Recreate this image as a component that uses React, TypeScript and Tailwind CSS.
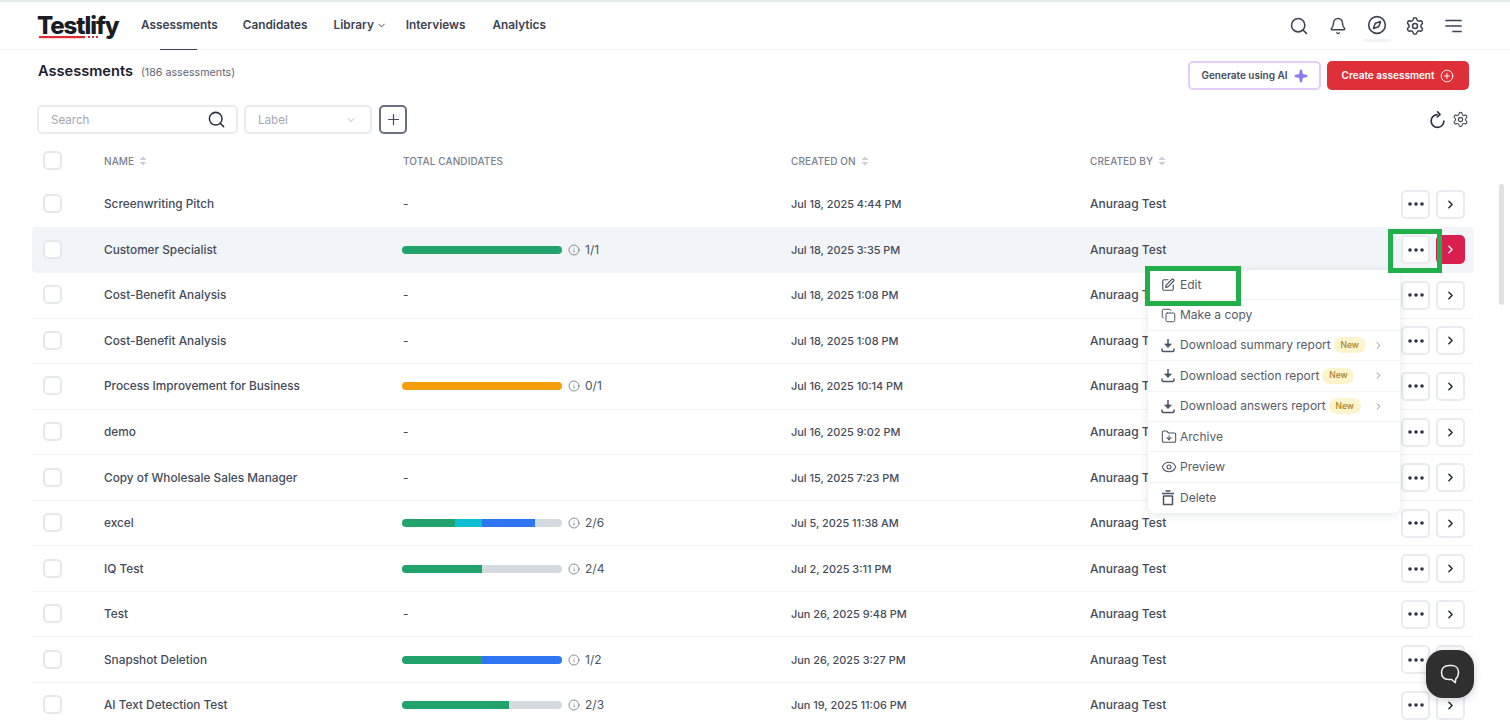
import { Search, Bell, Compass, Settings, Sparkle, CirclePlus, Plus, ChevronDown, ChevronRight, SquarePen, Copy, FolderDown, Eye, Info } from "lucide-react";

type Seg = { c: string; w: number };
type Row = { name: string; segs?: Seg[]; count?: string; date: string };

const green = "#22a36b", blue = "#2f74f0", cyan = "#0dbfd0", orange = "#f59e0b";

const rows: Row[] = [
  { name: "Screenwriting Pitch", date: "Jul 18, 2025 4:44 PM" },
  { name: "Customer Specialist", segs: [{ c: green, w: 100 }], count: "1/1", date: "Jul 18, 2025 3:35 PM" },
  { name: "Cost-Benefit Analysis", date: "Jul 18, 2025 1:08 PM" },
  { name: "Cost-Benefit Analysis", date: "Jul 18, 2025 1:08 PM" },
  { name: "Process Improvement for Business", segs: [{ c: orange, w: 100 }], count: "0/1", date: "Jul 16, 2025 10:14 PM" },
  { name: "demo", date: "Jul 16, 2025 9:02 PM" },
  { name: "Copy of Wholesale Sales Manager", date: "Jul 15, 2025 7:23 PM" },
  { name: "excel", segs: [{ c: green, w: 33.4 }, { c: cyan, w: 16.6 }, { c: blue, w: 33.4 }], count: "2/6", date: "Jul 5, 2025 11:38 AM" },
  { name: "IQ Test", segs: [{ c: green, w: 50 }], count: "2/4", date: "Jul 2, 2025 3:11 PM" },
  { name: "Test", date: "Jun 26, 2025 9:48 PM" },
  { name: "Snapshot Deletion", segs: [{ c: green, w: 50 }, { c: blue, w: 50 }], count: "1/2", date: "Jun 26, 2025 3:27 PM" },
  { name: "AI Text Detection Test", segs: [{ c: green, w: 66.7 }], count: "2/3", date: "Jun 19, 2025 11:06 PM" },
];

function Dots() {
  return (
    <svg width="18" height="6" viewBox="0 0 18 6" className="text-[#2d3348]">
      <circle cx="3" cy="3" r="1.8" fill="currentColor" />
      <circle cx="9" cy="3" r="1.8" fill="currentColor" />
      <circle cx="15" cy="3" r="1.8" fill="currentColor" />
    </svg>
  );
}

function SortIcon() {
  return (
    <svg width="8" height="10" viewBox="0 0 8 10" className="text-[#c9ced8]">
      <path d="M4 0.5 7.5 4H0.5Z M4 9.5 0.5 6H7.5Z" fill="currentColor" />
    </svg>
  );
}

function DownloadTray() {
  return (
    <svg width="14" height="15" viewBox="0 0 14 15" fill="none" stroke="#4b5563" strokeWidth="1.5">
      <path d="M7 1v8" />
      <path d="M3.6 6 7 9.6 10.4 6Z" fill="#4b5563" strokeWidth="0.8" />
      <path d="M1 11v1.2c0 .9.7 1.3 1.3 1.3h9.4c.6 0 1.3-.4 1.3-1.3V11" strokeLinecap="round" />
    </svg>
  );
}

function TrashIcon() {
  return (
    <svg width="14" height="16" viewBox="0 0 14 16" fill="none" stroke="#4b5563" strokeWidth="1.5">
      <path d="M1 3.5h12" />
      <path d="M4.5 1h5" />
      <path d="M2.5 6h9v8.5h-9z" strokeLinejoin="round" />
    </svg>
  );
}

function RefreshIcon() {
  return (
    <svg width="17" height="18" viewBox="0 0 17 18" fill="none" stroke="currentColor" strokeWidth="1.6" strokeLinecap="round">
      <path d="M8.2 3.6A6.4 6.4 0 1 0 14.9 10" />
      <path d="M8.6 0.8 11 3.6 8.2 6" strokeLinejoin="round" />
    </svg>
  );
}

function HeaderCell({ label, sort }: { label: string; sort?: boolean }) {
  return (
    <div className="flex items-center gap-[5px] text-[10px] font-medium tracking-[0.01em] text-[#7a8090]">
      <span>{label}</span>
      {sort && <SortIcon />}
    </div>
  );
}

function Checkbox() {
  return <div className="mt-[-1px] h-[19px] w-[19px] rounded-[5px] border-2 border-[#e6e8ee] bg-white" />;
}

function Progress({ segs, count }: { segs: Seg[]; count?: string }) {
  return (
    <div className="ml-[-1px] flex items-center">
      <div className="flex h-[8px] w-[160px] overflow-hidden rounded-full bg-[#d5dae1]">
        {segs.map((s, i) => (
          <div key={i} className="h-full" style={{ width: `${s.w}%`, backgroundColor: s.c }} />
        ))}
      </div>
      <Info size={12} strokeWidth={1.6} className="ml-[6px] text-[#6b7280]" />
      <span className="ml-[5px] text-[12px] text-[#4b5563]">{count}</span>
    </div>
  );
}

function TableRow({ row, active }: { row: Row; active: boolean }) {
  return (
    <div
      className={`grid h-[45.55px] grid-cols-[61px_299px_388px_299px_1fr_auto] items-center border-b pl-[11px] pr-[9px] ${
        active ? "rounded-[4px] border-transparent bg-[#f2f5f8]" : "border-[#f3f4f6]"
      }`}
    >
      <Checkbox />
      <div className="text-[11.8px] font-medium leading-[18px] text-[#444b5a]">{row.name}</div>
      <div className="text-[12px] text-[#444b5a]">{row.segs ? <Progress segs={row.segs} count={row.count} /> : "-"}</div>
      <div className="text-[10.9px] font-medium leading-[18px] text-[#444b5a]">{row.date}</div>
      <div className="text-[12px] font-medium leading-[18px] text-[#444b5a]">Anuraag Test</div>
      <div className="flex items-center gap-[6px]">
        <button className="flex h-[29px] w-[29px] items-center justify-center rounded-[5px] border-2 border-[#e9ebf1] bg-white">
          <Dots />
        </button>
        {active ? (
          <button className="flex h-[29px] w-[29px] items-center justify-center rounded-[5px] bg-[#d81f4f] text-white">
            <ChevronRight size={13} strokeWidth={2.4} />
          </button>
        ) : (
          <button className="flex h-[29px] w-[29px] items-center justify-center rounded-[5px] border-2 border-[#e9ebf1] bg-white text-[#1f2433]">
            <ChevronRight size={13} strokeWidth={2.6} />
          </button>
        )}
      </div>
    </div>
  );
}

function MenuItem({ icon, label, isNew }: { icon: React.ReactNode; label: string; isNew?: boolean }) {
  return (
    <div className="flex h-[30.4px] items-center border-b border-[#f3f4f6] pl-[13px] pr-[16px] text-[12px] text-[#575c68] last:border-b-0">
      <span className="flex w-[19px] shrink-0 items-center">{icon}</span>
      <span>{label}</span>
      {isNew && (
        <>
          <span className="ml-[3px] flex h-[16px] w-[32px] items-center justify-center rounded-full bg-[#fdf3cd] text-[8.5px] font-medium text-[#a9801f]">
            New
          </span>
          <ChevronRight size={11} strokeWidth={1.7} className="ml-auto text-[#6b7280]" />
        </>
      )}
    </div>
  );
}

export default function App() {
  return (
    <div className="relative h-[725px] w-[1510px] overflow-hidden bg-white font-['Inter','Liberation_Sans',sans-serif]">
      {/* navbar */}
      <header className="flex h-[50px] items-center border-b border-t-2 border-b-[#f3f4f6] border-t-[#e3e9e8] pl-[37px] pr-[48px]">
        <div className="relative w-[84px] text-[24px] font-extrabold leading-none tracking-[-0.045em] text-[#1a1c24]">
          Testlify
          <svg width="64" height="4" viewBox="0 0 64 4" className="absolute left-[2px] top-[22px]">
            <rect width="46" height="2.2" fill="#e02b36" />
            <rect x="49" width="2" height="2" fill="#e02b36" />
            <rect x="53" width="2" height="2" fill="#e02b36" />
            <rect x="57" width="2" height="2" fill="#e02b36" />
          </svg>
        </div>
        <nav className="ml-[20px] flex h-full items-center text-[11.8px] font-semibold text-[#3b4252]">
          <div className="relative flex h-full items-center">
            Assessments
            <div className="absolute bottom-[-1px] left-[19px] h-[1.5px] w-[37px] bg-[#3b4252]" />
          </div>
          <div className="ml-[25px]">Candidates</div>
          <div className="ml-[26px] flex items-center gap-[2px]">
            Library <ChevronDown size={11} strokeWidth={2} />
          </div>
          <div className="ml-[19px]">Interviews</div>
          <div className="ml-[27px]">Analytics</div>
        </nav>
        <div className="ml-auto flex items-center text-[#3b4252]">
          <Search size={20} strokeWidth={1.9} />
          <Bell size={18} strokeWidth={1.9} className="ml-[20px]" />
          <div className="relative ml-[20px]">
            <Compass size={20} strokeWidth={1.9} className="mt-[-2px]" />
            <div className="absolute left-[-4px] top-[22px] h-[3px] w-[28px] rounded bg-[#f1f4f7]" />
          </div>
          <Settings size={20} strokeWidth={1.8} className="ml-[18px]" />
          <svg width="17" height="14" viewBox="0 0 17 14" fill="none" stroke="currentColor" strokeWidth="1.7" strokeLinecap="round" className="ml-[20px]">
            <path d="M1 1.5h15M1 7h15M8 12.5h8" />
          </svg>
        </div>
      </header>

      {/* title */}
      <div className="flex items-start justify-between pl-[38px] pr-[41px] pt-[11px]">
        <div className="flex items-baseline">
          <h1 className="text-[14.6px] font-semibold text-[#1c2130]">Assessments</h1>
          <span className="ml-[8px] text-[10.7px] text-[#5f6573]">(186 assessments)</span>
        </div>
        <div className="flex gap-[6px]">
          <button className="flex h-[29px] w-[133px] items-center justify-center gap-[6px] rounded-[5px] border-2 border-[#e3ccf7] bg-white text-[10px] font-semibold text-[#444b5a]">
            Generate using AI
            <Sparkle size={14} fill="#8d7bf0" stroke="#8d7bf0" />
          </button>
          <button className="flex h-[29px] w-[142px] items-center justify-center gap-[6px] rounded-[5px] bg-[#df2f38] text-[10px] font-semibold text-white">
            Create assessment
            <CirclePlus size={14} strokeWidth={1.6} />
          </button>
        </div>
      </div>

      {/* toolbar */}
      <div className="mt-[15px] flex items-center pl-[37px] pr-[41px]">
        <div className="flex h-[29px] w-[201px] items-center justify-between rounded-[5px] border-2 border-[#e9ebf1] pl-[12px] pr-[10px] text-[11.6px] leading-[18px] text-[#a3a8b4]">
          Search
          <Search size={19} strokeWidth={1.9} className="text-[#2b3040]" />
        </div>
        <div className="ml-[6px] flex h-[29px] w-[128px] items-center justify-between rounded-[5px] border-2 border-[#e9ebf1] pl-[12px] pr-[13px] text-[11.6px] leading-[18px] text-[#a3a8b4]">
          Label
          <ChevronDown size={12} strokeWidth={1.6} />
        </div>
        <button className="ml-[7px] flex h-[29px] w-[28px] items-center justify-center rounded-[5px] border-2 border-[#6b7080] text-[#454b5c]">
          <Plus size={17} strokeWidth={1.7} />
        </button>
        <div className="ml-auto flex items-center gap-[6px] text-[#2b3040]">
          <RefreshIcon />
          <Settings size={17} strokeWidth={1.6} className="text-[#454b5c]" />
        </div>
      </div>

      {/* table */}
      <div className="ml-[32px] mr-[36px] mt-[11px]">
        <div className="grid h-[32px] grid-cols-[61px_299px_388px_299px_1fr] items-center pl-[11px]">
          <Checkbox />
          <HeaderCell label="NAME" sort />
          <HeaderCell label="TOTAL CANDIDATES" />
          <HeaderCell label="CREATED ON" sort />
          <HeaderCell label="CREATED BY" sort />
        </div>
        <div className="mt-[5px]">
          {rows.map((r, i) => (
            <TableRow key={i} row={r} active={i === 1} />
          ))}
        </div>
      </div>

      {/* dropdown menu */}
      <div className="absolute left-[1148px] top-[270px] w-[252px] rounded-[8px] bg-white shadow-[0_2px_10px_rgba(30,40,60,0.12)]">
        <MenuItem icon={<SquarePen size={14} strokeWidth={2} className="text-[#4b5563]" />} label="Edit" />
        <MenuItem icon={<Copy size={15} strokeWidth={1.6} className="text-[#4b5563]" />} label="Make a copy" />
        <MenuItem icon={<DownloadTray />} label="Download summary report" isNew />
        <MenuItem icon={<DownloadTray />} label="Download section report" isNew />
        <MenuItem icon={<DownloadTray />} label="Download answers report" isNew />
        <MenuItem icon={<FolderDown size={16} strokeWidth={1.6} className="text-[#4b5563]" />} label="Archive" />
        <MenuItem icon={<Eye size={16} strokeWidth={1.6} className="text-[#4b5563]" />} label="Preview" />
        <MenuItem icon={<TrashIcon />} label="Delete" />
      </div>

      {/* green annotation boxes */}
      <div className="absolute left-[1145px] top-[266px] h-[40px] w-[96px] border-[5px] border-[#21ae4b]" />
      <div className="absolute left-[1388px] top-[229px] h-[44px] w-[54px] border-[5px] border-[#21ae4b]" />

      {/* scrollbar */}
      <div className="absolute left-[1499px] top-[184px] h-[121px] w-[5px] rounded-full bg-[#dfe1e5]" />

      {/* chat */}
      <div className="absolute left-[1426px] top-[650px] flex h-[48px] w-[48px] items-center justify-center rounded-[17px] bg-[#2f2f2f] shadow-[0_2px_8px_rgba(0,0,0,0.2)]">
        <svg width="22" height="22" viewBox="0 0 22 22" fill="none" stroke="#f2f2f2" strokeWidth="1.5" strokeLinejoin="round">
          <path d="M10 2.5h2.5c4 0 7 2.4 7 6.6 0 3.2-1 5.4-2.6 6.6l-.6 4-3.6-3.2H9.5c-4.2 0-7-2.4-7-7.2 0-4.4 3-6.8 7.5-6.8Z" />
        </svg>
      </div>
    </div>
  );
}
